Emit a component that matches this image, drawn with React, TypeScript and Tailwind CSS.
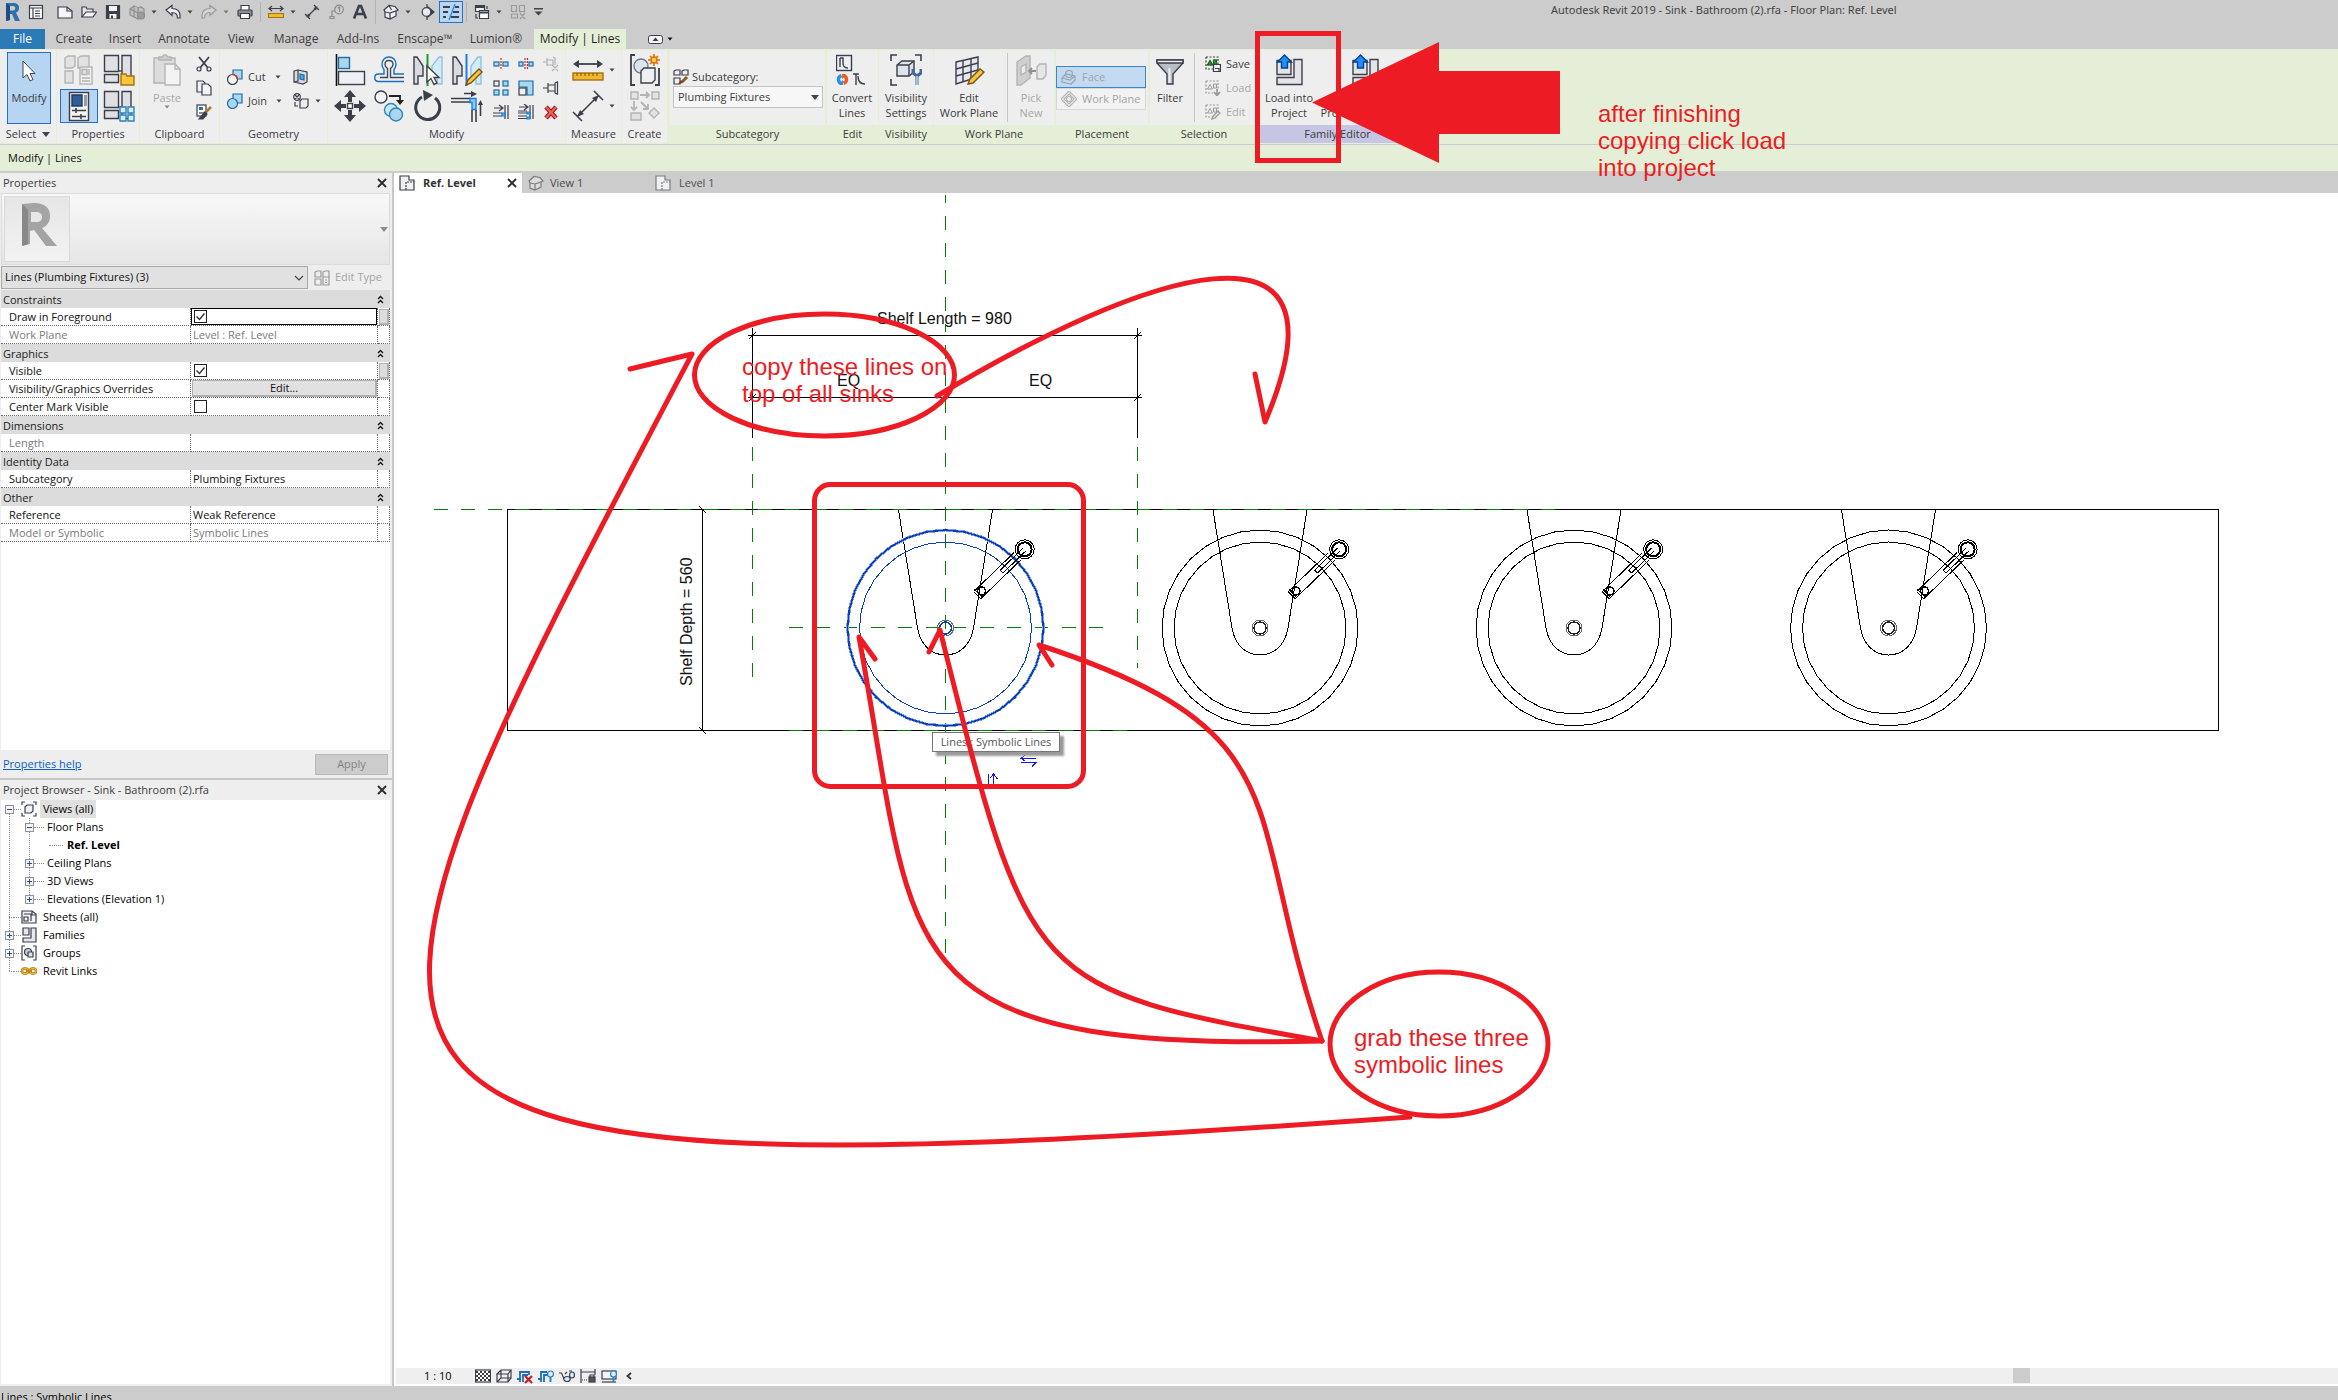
import React from "react";

type Kids = { children?: React.ReactNode };

const D = "#3b3f4a";

function I16({ children }: Kids) {
  return (
    <svg width="16" height="16" viewBox="0 0 16 16" fill="none" stroke={D} strokeWidth="1.2" className="shrink-0" aria-hidden="true">
      {children}
    </svg>
  );
}
function I32({ children }: Kids) {
  return (
    <svg width="32" height="32" viewBox="0 0 32 32" fill="none" stroke={D} strokeWidth="1.4" className="shrink-0" aria-hidden="true">
      {children}
    </svg>
  );
}
function Caret({ color = "#444" }: { color?: string }) {
  return (
    <svg width="6" height="4" viewBox="0 0 6 4" className="shrink-0" aria-hidden="true">
      <path d="M0.5 0.5h5L3 3.5z" fill={color} />
    </svg>
  );
}
function CloseX() {
  return (
    <svg width="10" height="10" viewBox="0 0 10 10" stroke="#2b2b2b" strokeWidth="1.8" aria-hidden="true">
      <path d="M1 1l8 8M9 1l-8 8" />
    </svg>
  );
}

/* ---------- quick access toolbar ---------- */

function QBtn({ label, caret, caretColor, children }: Kids & { label: string; caret?: boolean; caretColor?: string }) {
  return (
    <button type="button" aria-label={label} className="flex items-center gap-[6px]">
      {children}
      {caret && <Caret color={caretColor} />}
    </button>
  );
}

function QuickAccess() {
  return (
    <div className="flex h-6 items-center">
      <div className="flex items-center gap-2 pr-[13px] pl-1">
        <QBtn label="Revit">
          <svg width="16" height="20" viewBox="0 0 16 20" aria-hidden="true">
            <path d="M2 1h7c4 0 6 2 6 5 0 2.500-1.300 4-3 4.700L16 19h-5L8 12H6v6l-4 1z" fill="#2f6fae" />
            <path d="M6 4h3c1.500 0 2.200.800 2.200 2S10.500 8.500 9 8.500H6z" fill="#cccccc" />
            <path d="M2 1l4 3v14l-4 1z" fill="#1d4c86" />
          </svg>
        </QBtn>
        <QBtn label="Home view">
          <I16>
            <rect x="1.500" y="1.500" width="13" height="13" fill="#fff" />
            <path d="M1.500 4h13M5 4v10M7 7h5M7 9.500h5M7 12h5" />
          </I16>
        </QBtn>
      </div>
      <div className="flex items-center gap-2 pr-[7px]">
        <QBtn label="New">
          <I16>
            <path d="M1 3h9l5 4v7H1z" fill="#f4f5f8" />
            <path d="M10 3v4h5" />
          </I16>
        </QBtn>
        <QBtn label="Open">
          <I16>
            <path d="M1 13V3h4l1 2h6v3" fill="#e6e7ea" />
            <path d="M1 13l4-5h10.500L12 13z" fill="#f4f5f8" />
          </I16>
        </QBtn>
        <QBtn label="Save">
          <I16>
            <path d="M1.500 1.500h13v13h-13z" fill="#3b3f4a" />
            <path d="M4 2h8v5H4zM4.500 10h7v4.500h-7z" fill="#f3f3f3" stroke="none" />
            <path d="M6 11.500h2v3H6z" fill={D} stroke="none" />
          </I16>
        </QBtn>
        <QBtn label="Synchronize" caret>
          <I16>
            <g stroke="#8e8e8e" fill="#c0c0c0">
              <path d="M1 5l4-3 4 2 3-1 3 2v6l-6 4-4-2-4-2z" />
              <path d="M5 2v5l4 2V4M1 5l4 2v6" />
              <circle cx="12" cy="11.500" r="3.500" fill="#9c9c9c" />
            </g>
          </I16>
        </QBtn>
        <QBtn label="Undo" caret>
          <I16>
            <path d="M1 6l6-4.500v3c5 0 8 2 8 7.500v2h-2.500c0-4-1.500-5.500-5.500-5.500v3z" fill="#eceef2" />
          </I16>
        </QBtn>
        <QBtn label="Redo" caret caretColor="#777">
          <I16>
            <path d="M15 6L9 1.500v3c-5 0-8 2-8 7.500v2h2.500c0-4 1.500-5.500 5.500-5.500v3z" fill="#d4d4d4" stroke="#9a9a9a" />
          </I16>
        </QBtn>
        <QBtn label="Print">
          <I16>
            <path d="M4 6V1.500h8V6" fill="#fff" />
            <rect x="1" y="6" width="14" height="6" rx="1" fill="#8b8e96" />
            <path d="M3.500 9.500h9v5h-9z" fill="#fff" />
          </I16>
        </QBtn>
      </div>
      <div className="flex h-5 items-center gap-2 border-l border-[#b3b3b3] px-[7px]">
        <QBtn label="Measure" caret>
          <I16>
            <path d="M1 4.500h14M4 2L1 4.500 4 7M12 2l3 2.500L12 7" />
            <rect x="0.500" y="9.500" width="15" height="4" fill="#f0b92f" stroke="#a8720d" strokeWidth="1" />
          </I16>
        </QBtn>
        <QBtn label="Aligned Dimension">
          <I16>
            <path d="M3 13L13 3M10 1l5 5M1 10l5 5" />
            <path d="M13.500 2.500l-4 1.500 2.500 2.500zM2.500 13.500l4-1.500L4 9.500z" fill={D} stroke="none" />
          </I16>
        </QBtn>
        <QBtn label="Tag by Category">
          <I16>
            <g stroke="#8b8b8b">
              <circle cx="11" cy="5.500" r="4.300" />
              <path d="M10 4l1.500-1v5M7 7H4v5M2 12.500h4v2H2z" />
            </g>
          </I16>
        </QBtn>
        <QBtn label="Text">
          <I16>
            <path d="M2 14.500L7 2h2l5 12.500M4.500 10h7" strokeWidth="2.600" />
          </I16>
        </QBtn>
      </div>
      <div className="flex h-6 items-center gap-2 border-l border-[#b3b3b3] pl-[7px]">
        <QBtn label="Default 3D View" caret>
          <I16>
            <path d="M1 6l5-4.500 6 1L15 6l-2 1v5l-6 3-5-2V8z" fill="#eef0f3" />
            <path d="M7 15V9L13 7M2 8l5 1M6 1.500L8.500 6" />
          </I16>
        </QBtn>
        <QBtn label="Section">
          <I16>
            <path d="M8 0v3M8 13v3" />
            <path d="M9 3l6 5-6 5z" fill={D} />
            <circle cx="7.500" cy="8" r="4.300" fill="#e9ebef" />
          </I16>
        </QBtn>
      </div>
      <button type="button" aria-label="Thin Lines" className="ml-1 flex h-[22px] w-6 items-center justify-center border border-[#2a70c0] bg-[#b8d6f2]">
        <I16>
          <path d="M0 3h7M0 8h5M0 13h3M12 3h4M10 8h6M8 13h8" strokeWidth="2" />
          <path d="M12 0L6 16" stroke="#1f7fe0" />
        </I16>
      </button>
      <div className="ml-[3px] flex h-5 items-center gap-2 border-l border-[#b3b3b3] pl-[7px]">
        <QBtn label="Switch Windows" caret>
          <I16>
            <path d="M1.500 1.500h9v6h-9z" fill="#eee" />
            <path d="M5.500 6.500h9v8h-9z" fill="#fff" />
            <path d="M1.500 3h9M5.500 8.500h9" strokeWidth="2" />
            <path d="M13 2v3M2 10v4h2" />
          </I16>
        </QBtn>
        <QBtn label="Close Hidden">
          <I16>
            <g stroke="#9a9a9a">
              <path d="M1.500 1.500h5v6h-5zM9.500 1.500h5v6h-5zM1.500 10h6v4h-6zM10 9l5 6M15 9l-5 6" />
            </g>
          </I16>
        </QBtn>
        <button type="button" aria-label="Customize Quick Access Toolbar">
          <svg width="9" height="8" viewBox="0 0 9 8" aria-hidden="true">
            <path d="M0 0h9v1.500H0zM0.500 3.500h8L4.500 7.500z" fill="#444" />
          </svg>
        </button>
      </div>
    </div>
  );
}

/* ---------- ribbon ---------- */

const TABS: [string, string][] = [
  ["Create", "w-[58px]"],
  ["Insert", "w-[44px]"],
  ["Annotate", "w-[74px]"],
  ["View", "w-[40px]"],
  ["Manage", "w-[70px]"],
  ["Add-Ins", "w-[54px]"],
  ["Enscape™", "w-[80px]"],
  ["Lumion®", "w-[62px]"],
];

function TabRow() {
  return (
    <nav className="flex h-5 text-[12px] leading-5 text-[#3c3c3c]" aria-label="Ribbon tabs">
      <button type="button" className="w-[45px] bg-[#2a7ab5] text-white">File</button>
      {TABS.map(([t, w]) => (
        <button type="button" key={t} className={w + " whitespace-nowrap text-center"}>{t}</button>
      ))}
      <span className="w-[7px]" />
      <button type="button" className="w-[92px] bg-[#e5efd7] whitespace-nowrap text-[#1f1f1f]">Modify | Lines</button>
      <button type="button" aria-label="Minimize ribbon" className="ml-[22px] flex items-center gap-1">
        <svg width="15" height="9" viewBox="0 0 15 9" aria-hidden="true">
          <rect x="0.500" y="0.500" width="14" height="8" rx="2" fill="#f4f4f4" stroke={D} />
          <path d="M4.500 6h6l-3-3.500z" fill={D} />
        </svg>
        <Caret color="#111" />
      </button>
    </nav>
  );
}

function Panel({ w, label, tint, caret, children }: Kids & { w: string; label: string; tint?: string; caret?: boolean }) {
  return (
    <section className={w + " flex shrink-0 flex-col bg-[#eeeeee]"} aria-label={label}>
      <div className="flex h-[75px]">{children}</div>
      <h2 className={(tint ?? "") + " flex h-[18px] items-center justify-center gap-[6px] whitespace-nowrap"}>
        {label}
        {caret && <svg width="8" height="5" viewBox="0 0 8 5" aria-hidden="true"><path d="M0 0h8L4 5z" fill="#444" /></svg>}
      </h2>
    </section>
  );
}

function BigBtn({ w, lines, dim, children }: Kids & { w: string; lines: string[]; dim?: boolean }) {
  return (
    <button type="button" disabled={dim} className={w + (dim ? " text-[#a8a8a8]" : "") + " flex shrink-0 flex-col items-center pt-1 leading-[15px]"}>
      {children}
      <span className="mt-1 flex flex-col whitespace-nowrap">
        {lines.map((l) => <span key={l}>{l}</span>)}
      </span>
    </button>
  );
}

function IconBtn({ label, children }: Kids & { label: string }) {
  return (
    <button type="button" aria-label={label} className="flex items-center justify-center">
      {children}
    </button>
  );
}

const windowGlyph = (
  <>
    <path d="M1.500 1.500h14v16h-14zM19 1.500h9v27h-9zM1.500 20.500h14v8h-14z" fill="#dfe0e4" />
    <path d="M19 17h-4" />
  </>
);

const G = "#b4b4b4";

const MODIFY_LARGE: [string, React.ReactNode][] = [
  ["Align", <><path d="M2.500 0v32" stroke="#111" strokeWidth="1.600" /><rect x="4.500" y="3.500" width="11" height="11" fill="#a9d8ee" stroke="#1b6ea8" /><rect x="4.500" y="17.500" width="26" height="13" fill="#eef0f4" /></>],
  ["Offset", <><path d="M31 27.500H5.500c-5 0-5-7.500 0-7.500H11v-4.500c-1.500-2-2-3.500-2-5C9 6 12 3 16 3s7 3 7 7.500c0 1.500-.500 3-2 5V20h10" stroke="#1a6fc0" /><path d="M31 23.500H17.500v-9c2-1.500 2.500-2.500 2.500-4C20 8 18.500 6.500 16 6.500S12 8 12 10.500c0 1.500.500 2.500 2.500 4v9H7" stroke="#444a55" /></>],
  ["Mirror - Pick Axis", <><path d="M2 3h3l6 9v10H6v8H2z" fill="#d9dbe0" /><path d="M30 3h-3l-7 9v10h5v8h5z" fill="#d3ebf6" stroke="#8fc3df" /><path d="M15.500 0v32" stroke="#1d9a2a" strokeWidth="2" /><path d="M15 12v16l4-3.500 3 6 3-1.500-3-5.500h5z" fill="#fff" stroke="#444" /></>],
  ["Mirror - Draw Axis", <><path d="M2 3h3l6 9v10H6v8H2z" fill="#d9dbe0" /><path d="M30 3h-3l-7 9v10h5v8h5z" fill="#d3ebf6" stroke="#8fc3df" /><path d="M15.500 0v32" stroke="#1a7fe0" strokeWidth="2" /><path d="M15 31l2-5L28 15l3 3-11 11z" fill="#f6c63c" stroke="#7d5212" /></>],
  ["Move", <><path d="M16 0l6 7h-4v5h-4V7h-4zM16 32l-6-7h4v-5h4v5h4zM0 16l7-6v4h5v4H7v4zM32 16l-7 6v-4h-5v-4h5v-4z" fill={D} stroke="none" /><rect x="13.500" y="13.500" width="5" height="5" fill="#fff" /></>],
  ["Copy", <><circle cx="8" cy="7" r="6" fill="#f3f3f5" /><path d="M16 6h11v6" stroke="#222" strokeWidth="1.800" /><path d="M23 10h8l-4 5z" fill="#222" stroke="none" /><circle cx="18" cy="20" r="6.500" fill="#cfe8f5" stroke="#2d83bd" /><circle cx="23" cy="24.500" r="6.500" fill="#a9d8ee" stroke="#2d83bd" /></>],
  ["Rotate", <><path d="M10 7a12 12 0 1 0 13 1" strokeWidth="3" /><path d="M11 0l10 5-9 6z" fill={D} stroke="none" /></>],
  ["Trim/Extend to Corner", <><path d="M0 8.500h20M0 12h20M13 3.500h8" strokeWidth="1.600" /><path d="M20 1l6 3-6 3z" fill={D} stroke="none" /><path d="M19 8.500h6v11h-4v-7h-2z" fill="#8fc8f5" stroke="#1a7fe0" /><path d="M21 20v12M25 20v12M29.500 14v12" strokeWidth="1.600" /><path d="M27 15l2.500-5 2.500 5z" fill={D} stroke="none" /></>],
];

const MODIFY_SMALL: [string, React.ReactNode][] = [
  ["Split Element", <><rect x="1" y="6" width="5" height="4" fill="#a9d8ee" stroke="#1b6ea8" /><rect x="10" y="6" width="5" height="4" fill="#a9d8ee" stroke="#1b6ea8" /><path d="M8 2v12" stroke="#d22" strokeDasharray="2 1" /></>],
  ["Split with Gap", <><rect x="1" y="6" width="4" height="4" fill="#a9d8ee" stroke="#1b6ea8" /><rect x="11" y="6" width="4" height="4" fill="#a9d8ee" stroke="#1b6ea8" /><path d="M7 2v12M9.500 2v12" stroke="#d22" strokeDasharray="2 1" /></>],
  ["Unpin", <g stroke="#b0b0b0"><path d="M0 6h4M4 2v8M4 4h6v5H4M10 1l2 1v7M9 9l6 6M15 9l-6 6" /></g>],
  ["Array", <><rect x="1" y="1" width="5" height="5" fill="#f0f0f0" /><rect x="10" y="1" width="5" height="5" fill="#a9d8ee" stroke="#1b6ea8" /><rect x="1" y="10" width="5" height="5" fill="#a9d8ee" stroke="#1b6ea8" /><rect x="10" y="10" width="5" height="5" fill="#a9d8ee" stroke="#1b6ea8" /></>],
  ["Scale", <><path d="M1 1h14v14H9V7H1z" fill="#a9d8ee" stroke="#1b6ea8" /><rect x="1" y="8" width="7" height="7" fill="#f0f0f0" /></>],
  ["Pin", <path d="M0 8h5M5 3v10M5 5h7v6H5M12 3l2.500-1v12L12 13z" />],
  ["Trim/Extend Single", <><path d="M1 4h8M6 1l4 3-4 3M0 9h9M0 12h9M12 1v14M15 1v14" /><path d="M9 9h3v3H9z" fill="#5ab0f5" stroke="#1a7fe0" /></>],
  ["Trim/Extend Multiple", <><path d="M1 3h8M6 0l4 3-4 3M0 7h9M0 9h9M0 12h9M0 14.500h9M12 1v14M15 1v14" /><path d="M9 8h3v2H9zM9 13h3v2H9z" fill="#5ab0f5" stroke="#1a7fe0" /></>],
  ["Delete", <><path d="M3 3l10 11M13 3L3 14" stroke="#a81616" strokeWidth="4.500" /><path d="M3 3l10 11M13 3L3 14" stroke="#f0605c" strokeWidth="2.200" /></>],
];

function LoadIcon() {
  return (
    <I32>
      <path d="M4 6.500h14v14H4zM21 5.500h8v25H4v-7h17z" fill="#e3e4e8" />
      <path d="M11.500 1l7 7h-4v6h-6V8h-4z" fill="#1e90ff" stroke="#0a3f8a" />
    </I32>
  );
}

const selGlyph = (
  <>
    <path d="M1 1h12v8M1 1v12h7" strokeDasharray="2 1.500" />
    <path d="M2.500 9L5 4.500 7.500 9zM8.500 4h3v4h-3z" strokeWidth="1" />
  </>
);

function Ribbon() {
  const green = "bg-[#e5efd7]";
  return (
    <div className="flex h-24 items-start border-b border-[#c9c9d0] bg-[#e5efd7] pt-px text-[11px] text-[#3c3c3c]">
      <Panel w="w-[56px]" label="Select" caret>
        <button type="button" className="mt-[2px] ml-[7px] flex h-[72px] w-[44px] flex-col items-center border border-[#2a70c0] bg-[#b6d5f2] pt-[7px]">
          <svg width="16" height="22" viewBox="0 0 16 22" aria-hidden="true">
            <path d="M2 1v17l4-3.500 3 6.500 3-1.500-3-6h5z" fill="#fff" stroke="#444" />
          </svg>
          <span className="mt-2 leading-[15px]">Modify</span>
        </button>
      </Panel>
      <Panel w="ml-px w-[82px]" label="Properties">
        <div className="grid w-full grid-cols-2 grid-rows-[36px_36px] pt-[2px]">
          <IconBtn label="Type Properties">
            <I32>
              <g stroke={G} fill="#e2e2e2">
                <path d="M3 4l3-2h7v10l-3 2H3zM16 4l3-2h8v10l-3 2h-8zM3 17h8v12H3z" />
                <rect x="18" y="13" width="12" height="17" fill="#f0f0f0" />
                <path d="M20 15.500h5v5h-5zM27 15v6M20 24h8M20 27h8" />
              </g>
            </I32>
          </IconBtn>
          <IconBtn label="Family Category and Parameters">
            <I32>
              {windowGlyph}
              <path d="M18 20h5l1 2h7v9H18z" fill="#f6c63c" stroke="#a8720d" />
            </I32>
          </IconBtn>
          <button type="button" aria-label="Properties" className="ml-[3px] flex h-[34px] w-[38px] items-center justify-center self-center border border-[#2a70c0] bg-[#b6d5f2]">
            <I32>
              <rect x="6.500" y="2.500" width="19" height="28" fill="#f3f4f6" />
              <path d="M9 5h10v11H9z" fill="#2f5f95" stroke="#1b3c66" />
              <path d="M21 5h3v11h-3z" fill="#9a9da5" stroke="none" />
              <path d="M9 20.500h14M13 18v5M9 26.500h14M18 24v5" strokeWidth="1.600" />
            </I32>
          </button>
          <IconBtn label="Family Types">
            <I32>
              {windowGlyph}
              <path d="M17 17h6v6h-6zM25 17h6v6h-6zM17 25h6v6h-6zM25 25h6v6h-6z" fill="#d5edf8" stroke="#2d83bd" />
            </I32>
          </IconBtn>
        </div>
      </Panel>
      <Panel w="ml-px w-[79px]" label="Clipboard">
        <button type="button" disabled className="ml-[10px] flex w-[34px] flex-col items-center pt-1 text-[#a8a8a8]">
          <I32>
            <g stroke={G}>
              <path d="M3 4h21v25H3z" fill="#dcdcdc" />
              <path d="M8 6V3h3l2-2h2l2 2h3v3z" fill="#cfcfcf" />
              <path d="M14 10h10l5 5v16H14z" fill="#f3f3f3" />
              <path d="M24 10v5h5" />
            </g>
          </I32>
          <span className="mt-1 leading-[15px]">Paste</span>
          <Caret color="#888" />
        </button>
        <div className="ml-[12px] grid grid-rows-[24px_24px_24px] pt-[2px]">
          <IconBtn label="Cut">
            <I16><path d="M3 1l9 11M13 1L4 12" strokeWidth="1.800" /><circle cx="3" cy="13" r="2" /><circle cx="13" cy="13" r="2" /></I16>
          </IconBtn>
          <IconBtn label="Copy to Clipboard">
            <I16><path d="M1 1h6l2 2v9H1z" fill="#f3f3f5" /><path d="M6 4h6l3 3v8H6z" fill="#f3f3f5" /></I16>
          </IconBtn>
          <IconBtn label="Match Type Properties">
            <I16><rect x="1" y="1" width="9" height="11" fill="#fff" /><path d="M3 3h4v3H3z" fill="#2f6fae" stroke="none" /><path d="M3 9h5" /><path d="M15 3l-6 6" stroke="#b07a28" strokeWidth="2.500" /><path d="M9 8l2 2-4 5H3z" fill={D} /></I16>
          </IconBtn>
        </div>
      </Panel>
      <Panel w="ml-px w-[107px]" label="Geometry">
        <div className="flex flex-col gap-2 pt-[19px] pl-[7px]">
          <div className="flex h-4 items-center">
            <I16><path d="M6 1h9v9H6z" fill="#a9d8ee" stroke="#1b6ea8" /><circle cx="5.500" cy="10.500" r="5" fill="#f4f4f4" /><path d="M5 5.500a5 5 0 0 1 5.500 5" stroke="#e03030" strokeWidth="1.600" /></I16>
            <button type="button" className="ml-[5px] flex w-[45px] items-center gap-[9px]">Cut <Caret /></button>
            <IconBtn label="Apply Coping"><I16><path d="M1 2l4-1v11l-4 1zM5 1l9 2v10l-4 2-9-2" fill="#d9dbe0" /><path d="M7 5l4 1v5l-4-1z" fill="#4da6e8" stroke="#1b6ea8" /></I16></IconBtn>
          </div>
          <div className="flex h-4 items-center">
            <I16><path d="M6 1h9v9H6z" fill="#a9d8ee" stroke="#1b6ea8" /><circle cx="5.500" cy="10.500" r="5" fill="#a9d8ee" stroke="#1b6ea8" /></I16>
            <button type="button" className="ml-[5px] flex w-[45px] items-center gap-[9px]">Join <Caret /></button>
            <button type="button" aria-label="Split Face" className="flex items-center gap-[6px]">
              <I16><circle cx="4" cy="4" r="3.300" /><path d="M2 2l4 4M6 2L2 6M2 9v4h3M7 8l2-2h6v7l-2 2H7z" /></I16>
              <Caret />
            </button>
          </div>
        </div>
      </Panel>
      <Panel w="ml-px w-[237px]" label="Modify">
        <div className="ml-[2px] grid grid-cols-[39px_39px_39px_39px] grid-rows-[36px_36px] pt-[2px]">
          {MODIFY_LARGE.map(([l, g]) => <IconBtn key={l} label={l}><I32>{g}</I32></IconBtn>)}
        </div>
        <div className="ml-[2px] grid grid-cols-[25px_25px_25px] grid-rows-[24px_24px_24px] pt-[2px]">
          {MODIFY_SMALL.map(([l, g]) => <IconBtn key={l} label={l}><I16>{g}</I16></IconBtn>)}
        </div>
      </Panel>
      <Panel w="ml-px w-[55px]" label="Measure">
        <div className="ml-[6px] grid grid-rows-[36px_36px] pt-[2px]">
          <button type="button" aria-label="Measure Between References" className="flex items-center gap-[5px]">
            <I32><path d="M3 10h26" strokeWidth="1.800" /><path d="M1 10l6-4v8zM31 10l-6-4v8z" fill={D} stroke="none" /><rect x="1" y="19" width="30" height="7" fill="#efb830" stroke="#a8720d" /><path d="M5 19v3M9 19v3M13 19v3M17 19v3M21 19v3M25 19v3" stroke="#7d5212" strokeWidth="1" /></I32>
            <Caret />
          </button>
          <button type="button" aria-label="Aligned Dimension" className="flex items-center gap-[5px]">
            <I32><path d="M6 26L26 6M22 1l9 9M1 22l9 9" strokeWidth="1.600" /><path d="M27 5l-7 3 4 4zM5 27l7-3-4-4z" fill={D} stroke="none" /></I32>
            <Caret />
          </button>
        </div>
      </Panel>
      <Panel w="ml-px w-[45px]" label="Create">
        <div className="grid w-full grid-rows-[36px_36px] pt-[2px]">
          <IconBtn label="Create Group">
            <I32><path d="M6 1H2v30h4M26 31h4V14" strokeWidth="1.800" /><circle cx="12" cy="12" r="7" fill="#dde4ec" stroke="#707a88" /><path d="M12 17l3-3h11v12l-3 3H12z" fill="#eef0f4" /><path d="M25 0v12M19 6h12M21 2l8 8M29 2l-8 8" stroke="#e06a10" strokeWidth="1.600" /><circle cx="25" cy="6" r="3" fill="#ffd23a" stroke="#e06a10" /></I32>
          </IconBtn>
          <IconBtn label="Create Similar">
            <I32><g stroke={G} fill="#e2e2e2"><path d="M2 2h7v7H2zM23 2h7v7h-7zM2 23h10v7H2zM25 18l5 5-5 5-5-5z" /><path d="M11 5h9M17 2l3 3-3 3M5 11v9M2 17l3 3 3-3M12 12l7 7M19 14v5h-5" fill="none" strokeWidth="1.800" /></g></I32>
          </IconBtn>
        </div>
      </Panel>
      <Panel w="ml-[3px] w-[155px]" label="Subcategory" tint={green}>
        <div className="flex flex-col pt-[18px] pl-[3px]">
          <label htmlFor="subcat" className="flex h-[18px] items-center gap-[3px]">
            <I16><path d="M1 2l2-1h4v5H1zM9 2l2-1h4v5H9zM1 9h6v6H1z" fill="#f0f0f2" /><path d="M14 8l-5 5" stroke="#8a5a25" strokeWidth="3" /><path d="M8 11l2 3-5 1z" fill="#7a3d10" stroke="none" /></I16>
            Subcategory:
          </label>
          <div className="grid items-center">
            <select id="subcat" className="col-start-1 row-start-1 h-[22px] w-[150px] appearance-none border border-[#c4c4c4] bg-[#f7f7f7] pl-1 text-[11px] outline-none">
              <option>Plumbing Fixtures</option>
            </select>
            <svg width="8" height="5" viewBox="0 0 8 5" className="pointer-events-none col-start-1 row-start-1 mr-1 justify-self-end" aria-hidden="true"><path d="M0 0h8L4 5z" fill="#444" /></svg>
          </div>
        </div>
      </Panel>
      <Panel w="ml-[2px] w-[51px]" label="Edit" tint={green}>
        <BigBtn w="w-[50px]" lines={["Convert", "Lines"]}>
          <svg width="32" height="32" viewBox="3 0 32 32" fill="none" stroke={D} strokeWidth="1.4" aria-hidden="true"><rect x="3.500" y="1.500" width="15" height="15" fill="#eef0f4" /><path d="M7 4v9M7 4h3v5c0 3 2 5 5 5" /><path d="M8 20c-5 1-6 8-1 11l-2 0 5 0v-5l-1.500 1.500c-2-1-1.500-4 .500-4z" fill="#2a90f0" stroke="none" /><path d="M11 31c5-1 6-8 1-11l2 0h-5v5l1.500-1.500c2 1 1.500 4-.500 4z" fill="#f05a20" stroke="none" /><path d="M20 20h3v11M26 20h-3M25 22c0 5 2 8 7 8" /></svg>
        </BigBtn>
      </Panel>
      <Panel w="ml-px w-[54px]" label="Visibility" tint={green}>
        <BigBtn w="w-full" lines={["Visibility", "Settings"]}>
          <I32><path d="M1 7V1h6M25 1h6v6M1 25v6h6" strokeWidth="1.600" /><path d="M7 11l5-4h12v11l-5 4H7z" fill="#dfe3ea" /><path d="M7 11h12v11M19 11l5-4" /><path d="M23 15v4l4 3 4-3v-4M27 21v10" strokeWidth="3" stroke="#40689a" /><path d="M27 22v9" stroke="#cfe0f2" strokeWidth="1.400" /></I32>
        </BigBtn>
      </Panel>
      <Panel w="ml-px w-[120px]" label="Work Plane" tint={green}>
        <BigBtn w="w-[70px]" lines={["Edit", "Work Plane"]}>
          <I32><path d="M3 8l22-5v20L3 30z" fill="#e6e8f0" /><path d="M3 15l22-6M3 22l22-6M10 6v22M18 4v22" /><path d="M15 30l2-5 10-10 4 3-11 11z" fill="#f6c63c" stroke="#7d5212" /></I32>
        </BigBtn>
        <span className="my-[3px] ml-[3px] border-l border-[#c6c6c6]" />
        <BigBtn w="w-[46px]" lines={["Pick", "New"]} dim>
          <I32><g stroke={G}><path d="M2 8l9-6h4v22l-9 7H2z" fill="#cfcfcf" /><path d="M6 13l5-3v8l-5 3z" fill="#ececec" /><path d="M14 17h7M17 14l-3 3 3 3" stroke="#909090" strokeWidth="1.800" /><path d="M22 13l3-3h6v11l-3 4h-6z" fill="#e6e6e6" /></g></I32>
        </BigBtn>
      </Panel>
      <Panel w="ml-[2px] w-[92px]" label="Placement" tint={green}>
        <div className="flex w-[90px] flex-col pt-4 text-[#a4a4a4]">
          <button type="button" disabled className="flex h-[22px] items-center gap-[5px] border border-[#3f86cc] bg-[#c2daf1] pl-1">
            <I16><g stroke="#98a4b0"><path d="M1 9l4-4 9 2v4l-4 4-9-2z" /><circle cx="8" cy="5" r="3.500" /><path d="M1 9l8 2 5-4" /></g></I16>Face
          </button>
          <button type="button" disabled className="flex h-[22px] items-center gap-[5px] border border-[#d8d8d8] bg-[#f2f2f2] pl-1">
            <I16><g stroke={G}><path d="M8 0l8 8-8 8-8-8z" /><path d="M8 3l5 5-5 5-5-5z" /><circle cx="8" cy="8" r="2.500" /></g></I16>
            <span className="whitespace-nowrap">Work Plane</span>
          </button>
        </div>
      </Panel>
      <Panel w="ml-[2px] w-[108px]" label="Selection" tint={green}>
        <BigBtn w="w-[40px]" lines={["Filter"]}>
          <I32><path d="M3 6h26v3L19 20v10h-6V20L3 9z" fill="#b9bdc6" /><path d="M3 6h26v3H3z" fill="#eceef2" /><path d="M15.500 14v15" stroke="#eef0f4" strokeWidth="2" /></I32>
        </BigBtn>
        <span className="my-[3px] ml-1 border-l border-[#c6c6c6]" />
        <div className="ml-[10px] grid grid-rows-[24px_24px_24px] pt-[2px] text-[#a8a8a8]">
          <button type="button" className="flex items-center gap-[5px] text-[#3c3c3c]"><I16>{selGlyph}<path d="M2.500 9L5 4.500 7.500 9zM8.500 4h3v4h-3z" fill="#2f8f2f" stroke="#1d6a1d" /><path d="M8.500 8.500h7v7h-7z" fill="#f0f0f0" /><path d="M10 12.500h4v3" /></I16>Save</button>
          <button type="button" disabled className="flex items-center gap-[5px]"><I16><g stroke="#9a9a9a">{selGlyph}<path d="M12 9v6M9 12l3 3.500 3-3.500" strokeWidth="1.800" /></g></I16>Load</button>
          <button type="button" disabled className="flex items-center gap-[5px]"><I16><g stroke="#9a9a9a">{selGlyph}<path d="M7 15l1-3 5-5 2 2-5 5z" fill="#ddd" /></g></I16>Edit</button>
        </div>
      </Panel>
      <Panel w="ml-[2px] w-[155px]" label="Family Editor" tint="bg-[#c6c6e4]">
        <BigBtn w="w-[58px]" lines={["Load into", "Project"]}><LoadIcon /></BigBtn>
        <BigBtn w="w-[94px]" lines={["Load into", "Project and Close"]}><LoadIcon /></BigBtn>
      </Panel>
    </div>
  );
}

/* ---------- properties palette ---------- */

type Row =
  | { kind: "head"; name: string }
  | { kind: "check"; name: string; on: boolean; focus?: boolean; side?: boolean }
  | { kind: "text"; name: string; value: string; dim?: boolean }
  | { kind: "edit"; name: string };

const ROWS: Row[] = [
  { kind: "head", name: "Constraints" },
  { kind: "check", name: "Draw in Foreground", on: true, focus: true, side: true },
  { kind: "text", name: "Work Plane", value: "Level : Ref. Level", dim: true },
  { kind: "head", name: "Graphics" },
  { kind: "check", name: "Visible", on: true, side: true },
  { kind: "edit", name: "Visibility/Graphics Overrides" },
  { kind: "check", name: "Center Mark Visible", on: false },
  { kind: "head", name: "Dimensions" },
  { kind: "text", name: "Length", value: "", dim: true },
  { kind: "head", name: "Identity Data" },
  { kind: "text", name: "Subcategory", value: "Plumbing Fixtures" },
  { kind: "head", name: "Other" },
  { kind: "text", name: "Reference", value: "Weak Reference" },
  { kind: "text", name: "Model or Symbolic", value: "Symbolic Lines", dim: true },
];

function PropRow({ r }: { r: Row }) {
  if (r.kind === "head")
    return (
      <tr className="bg-[#dcdcdc]">
        <th colSpan={3} className="p-0 text-left font-normal text-[#222]">
          <div className="flex h-[18px] items-center justify-between pr-[6px] pl-[2px] leading-[15px]">
            {r.name}
            <svg width="7" height="9" viewBox="0 0 7 9" fill="none" stroke="#111" strokeWidth="1.300" aria-hidden="true">
              <path d="M1 4l2.500-2.500L6 4M1 8l2.500-2.500L6 8" />
            </svg>
          </div>
        </th>
      </tr>
    );
  const id = "prop-" + r.name.replace(/\W/g, "");
  const dim = r.kind === "text" && r.dim;
  return (
    <tr className={dim ? "text-[#7a7a7a]" : "text-[#111]"}>
      <td className="border-r border-b border-dotted border-[#6d6d6d] p-0 pl-2 whitespace-nowrap">
        <label htmlFor={r.kind === "check" ? id : undefined} className="flex h-[17px] items-center leading-[15px]">{r.name}</label>
      </td>
      <td className="border-r border-b border-dotted border-[#6d6d6d] p-0">
        {r.kind === "text" && <span className="flex h-[17px] items-center pl-[2px] leading-[15px]">{r.value}</span>}
        {r.kind === "check" && (
          <div className={(r.focus ? "border-black" : "border-transparent") + " grid h-[17px] items-center border pl-[2px]"}>
            <input id={id} type="checkbox" defaultChecked={r.on} className="peer col-start-1 row-start-1 size-[13px] appearance-none border border-[#222] bg-white" />
            <svg width="13" height="13" viewBox="0 0 13 13" fill="none" stroke="#333" strokeWidth="1.400" className="pointer-events-none invisible col-start-1 row-start-1 peer-checked:visible" aria-hidden="true">
              <path d="M2.500 6.500l3 3 5-6" />
            </svg>
          </div>
        )}
        {r.kind === "edit" && (
          <button type="button" className="ml-px flex h-[17px] w-[185px] items-center justify-center border border-r-2 border-b-2 border-[#b0b0b0] bg-[#e1e1e1] leading-[14px]">Edit...</button>
        )}
      </td>
      <td className="border-r border-b border-dotted border-[#6d6d6d] p-0">
        {r.kind === "check" && r.side && <button type="button" aria-label={"Associate " + r.name} className="ml-px block h-4 w-[10px] border border-r-2 border-b-2 border-[#b0b0b0] bg-[#dddddd]" />}
      </td>
    </tr>
  );
}

function PaletteTitle({ title }: { title: string }) {
  return (
    <div className="flex h-5 shrink-0 items-center justify-between pr-[5px] pl-[3px] text-[#3c3c3c]">
      <h2>{title}</h2>
      <button type="button" aria-label={"Close " + title}><CloseX /></button>
    </div>
  );
}

function Properties() {
  return (
    <section className="flex h-[607px] shrink-0 flex-col border-b-2 border-[#c8c8c8]" aria-label="Properties">
      <PaletteTitle title="Properties" />
      <div className="mr-[2px] ml-px flex h-[72px] shrink-0 items-center justify-between border border-[#dcdcdc] bg-linear-to-b from-[#f8f8f8] to-[#e6e6e6] pr-px pl-[2px]">
        <div className="flex size-[66px] items-start justify-center border border-[#dadada] bg-linear-to-b from-[#e6e6e6] to-[#f2f2f2] pt-[5px] pl-1">
          <svg width="38" height="45" viewBox="0 0 38 45" aria-hidden="true">
            <path d="M2 2l12-1c11 0 16 5 16 13 0 6-3 10-8 12l15 18H26L14 28l-4 1v13l-8 2z" fill="#a4a4a4" />
            <path d="M11 10h5c4 0 6 2 6 5s-2 5-5 5h-6z" fill="#e6e6e6" />
            <path d="M2 2l6 6v34l-6 2z" fill="#888888" />
          </svg>
        </div>
        <svg width="8" height="5" viewBox="0 0 8 5" aria-hidden="true"><path d="M0 0h8L4 5z" fill="#8c8c8c" /></svg>
      </div>
      <div className="flex h-[25px] shrink-0 items-center pl-px">
        <div className="grid items-center">
          <select aria-label="Type filter" className="col-start-1 row-start-1 h-[23px] w-[307px] appearance-none border border-[#a9a9a9] bg-[#e1e1e1] pl-[3px] text-[11px] text-[#111] outline-none">
            <option>Lines (Plumbing Fixtures) (3)</option>
          </select>
          <svg width="10" height="6" viewBox="0 0 10 6" fill="none" stroke="#444" strokeWidth="1.200" className="pointer-events-none col-start-1 row-start-1 mr-1 justify-self-end" aria-hidden="true"><path d="M1 1l4 4 4-4" /></svg>
        </div>
        <button type="button" disabled className="ml-[6px] flex items-center gap-[5px] text-[#a4a4a4]">
          <I16><g stroke="#9c9c9c"><path d="M1 2l2-1h4v6H1zM9 2l2-1h4v6H9zM1 9h6v6H1zM9 7h6v8H9zM11 10h2M11 12.500h2" /></g></I16>
          Edit Type
        </button>
      </div>
      <div className="mr-[2px] ml-px min-h-0 flex-1 bg-white">
        <table className="w-full table-fixed border-separate border-spacing-0">
          <colgroup><col className="w-[190px]" /><col /><col className="w-[12px]" /></colgroup>
          <tbody>{ROWS.map((r) => <PropRow key={r.kind + r.name} r={r} />)}</tbody>
        </table>
      </div>
      <div className="flex h-[28px] shrink-0 items-center justify-between pr-1 pl-[3px]">
        <a href="#help" className="text-[#0a5fc4] underline">Properties help</a>
        <button type="button" disabled className="h-[21px] w-[73px] border border-[#b9b9b9] bg-[#cccccc] text-[#838383]">Apply</button>
      </div>
    </section>
  );
}

/* ---------- project browser ---------- */

function Expander({ open, name }: { open: boolean; name: string }) {
  return (
    <button type="button" aria-label={(open ? "Collapse " : "Expand ") + name} aria-expanded={open} className="relative shrink-0">
      <svg width="9" height="9" viewBox="0 0 9 9" aria-hidden="true">
        <rect x="0.500" y="0.500" width="8" height="8" fill="#f4f4f4" stroke="#919191" />
        <path d={open ? "M2 4.500h5" : "M2 4.500h5M4.500 2v5"} stroke="#2b4f9e" />
      </svg>
    </button>
  );
}

type Node = { name: string; level: number; open?: boolean; leaf?: boolean; icon?: React.ReactNode; selected?: boolean; bold?: boolean };

const TREE: Node[] = [
  { name: "Views (all)", level: 0, open: true, selected: true, icon: <><path d="M4 1H1v3M12 1h3v3M4 15H1v-3M12 15h3v-3" /><path d="M4 6l2-2h6v6l-2 2H4z" fill="#eef0f3" /></> },
  { name: "Floor Plans", level: 1, open: true },
  { name: "Ref. Level", level: 2, leaf: true, bold: true },
  { name: "Ceiling Plans", level: 1 },
  { name: "3D Views", level: 1 },
  { name: "Elevations (Elevation 1)", level: 1 },
  { name: "Sheets (all)", level: 0, leaf: true, icon: <><path d="M1 2h10l4 3v9H1z" fill="#f3f3f5" /><path d="M3 5h7v7M3 12V8h4v4zM11 2v4h4" /></> },
  { name: "Families", level: 0, icon: <path d="M2 1h6v7H2zM10 1h5v14H2v-4h8z" fill="#e6e7eb" /> },
  { name: "Groups", level: 0, icon: <><path d="M4 1H1v14h3M12 1h3v14h-3" /><circle cx="7" cy="7" r="3.500" fill="#c9d2dc" /><path d="M7 7h5v5H7z" fill="#dfe3ea" /></> },
  { name: "Revit Links", level: 0, leaf: true, icon: <><rect x="1" y="5.500" width="6" height="5" rx="2.500" stroke="#a8720d" strokeWidth="2.600" /><rect x="9" y="5.500" width="6" height="5" rx="2.500" stroke="#a8720d" strokeWidth="2.600" /><rect x="1" y="5.500" width="6" height="5" rx="2.500" stroke="#f0b92f" /><rect x="9" y="5.500" width="6" height="5" rx="2.500" stroke="#f0b92f" /><path d="M5 8h6" stroke="#c48a10" strokeWidth="2" /></> },
];

const INDENT = ["pl-1", "pl-6", "pl-12"];

function Browser() {
  return (
    <section className="flex min-h-0 flex-1 flex-col" aria-label="Project Browser">
      <PaletteTitle title="Project Browser - Sink - Bathroom (2).rfa" />
      <div className="relative mr-[2px] mb-[2px] ml-px min-h-0 flex-1 overflow-hidden bg-white">
        <svg width="40" height="172" viewBox="0 0 40 172" className="pointer-events-none absolute top-0 left-0" fill="none" stroke="#8c8c8c" strokeDasharray="1 1" aria-hidden="true">
          <path d="M8.500 14v157M28.500 18v82" />
        </svg>
        <ul className="text-black">
          {TREE.map((n) => (
            <li key={n.name} className={INDENT[n.level] + (n.bold ? " font-bold" : "") + " relative flex h-[18px] items-center"}>
              {n.level === 2 ? <span className="mr-1 w-[14px] border-t border-dotted border-[#8c8c8c]" /> : (
                <>
                  {n.leaf ? <span className="ml-1 w-[5px] border-t border-dotted border-[#8c8c8c]" /> : <Expander open={!!n.open} name={n.name} />}
                  <span className={(n.level === 1 ? "mr-[3px] w-[10px]" : "w-[7px]") + " border-t border-dotted border-[#8c8c8c]"} />
                </>
              )}
              {n.icon && <I16>{n.icon}</I16>}
              <span className={(n.selected ? "bg-[#e0e0e0] " : "") + (n.icon ? "ml-[3px] px-[3px]" : "") + " leading-[18px]"}>{n.name}</span>
            </li>
          ))}
        </ul>
      </div>
    </section>
  );
}

/* ---------- drawing ---------- */

function ngon(cx: number, cy: number, r: number, n: number) {
  return Array.from({ length: n }, (_, i) => {
    const a = (i / n) * Math.PI * 2;
    return (cx + r * Math.cos(a)).toFixed(1) + "," + (cy + r * Math.sin(a)).toFixed(1);
  }).join(" ");
}

function Sink({ x, active }: { x: number; active?: boolean }) {
  const c = active ? "#0a3fb8" : "#000";
  return (
    <g transform={`translate(${x} 628)`} fill="none" stroke="#000" strokeWidth="1">
      <path d="M-47 -118L-28 0C-25 18 -13 27 0 27S25 18 28 0L47 -118" />
      {active && <polygon points={ngon(0, 0, 98, 32)} stroke="#7d9ee0" strokeWidth="3" />}
      <polygon points={ngon(0, 0, 98, 32)} stroke={c} strokeWidth={active ? 1.5 : 1} />
      <polygon points={ngon(0, 0, 86, 32)} stroke={c} />
      <circle r="8" stroke="#666" />
      <circle r="6" stroke={active ? "#0a3fb8" : "#222"} strokeWidth="1.500" />
      <g transform="translate(36 -37) rotate(-44)">
        <path d="M-6 -5h56M-6 5h56M-6 -5v10M-4 -6v12" />
        <circle r="4" strokeWidth="1.500" />
        <path d="M28 -2h32M28 2h32M28 -2v4" />
        <circle cx="60" r="9.500" />
        <circle cx="60" r="7" strokeWidth="2" />
      </g>
    </g>
  );
}

function Drawing() {
  return (
    <svg width="1944" height="1207" viewBox="394 193 1944 1207" shapeRendering="crispEdges" className="absolute top-0 left-0" role="img" aria-label="Floor plan of four sinks on a shelf">
      <g fill="none" stroke="#000" strokeWidth="1">
        <path d="M507.500 509.500H2218.500V730.500H507.500z" />
        <path d="M752.500 328V438M1137.500 328V438M748 335.500h394M748 397.500h394M702.500 509v222" />
        <path d="M749 339l7-7M1134 339l7-7M749 401l7-7M1134 401l7-7M699 506l7 7M699 727l7 7" />
      </g>
      <g fill="none" stroke="#008000" strokeWidth="1" strokeDasharray="14 13">
        <path d="M945.500 195V317M945.500 324V958" strokeDashoffset="6" />
        <path d="M752.500 447V678M1137.500 447V668" />
        <path d="M434 509.500H1555M789 730.500H1137" />
        <path d="M789 627.500H1104" strokeDasharray="13.600 13.700" />
      </g>
      {[945.5, 1260, 1574, 1888.5].map((x, i) => <Sink key={x} x={x} active={i === 0} />)}
      <g fill="#111" className="font-['Liberation_Sans',sans-serif] text-[16px]">
        <text x="877" y="324">Shelf Length = 980</text>
        <text x="837" y="386">EQ</text>
        <text x="1029" y="386">EQ</text>
        <text x="692" y="686" transform="rotate(-90 692 686)">Shelf Depth = 560</text>
      </g>
      <g fill="none" stroke="#1414f0" strokeWidth="1">
        <path d="M1036 758.500h-15l4-3M1021 762.500h15l-4 4M1021 758l4 3M988.500 788v-14M993.500 788v-14l4 5M993.500 774l-3 4" />
      </g>
    </svg>
  );
}

/* red pen markup drawn over the whole window */
function Markup() {
  return (
    <svg width="2338" height="1400" viewBox="0 0 2338 1400" className="pointer-events-none absolute top-0 left-0" role="img" aria-label="Markup">
      <g fill="none" stroke="#ed1c24" strokeWidth="5" strokeLinecap="round" strokeLinejoin="round">
        <rect x="1257.500" y="33.500" width="81" height="127" strokeLinejoin="miter" />
        <ellipse cx="824.500" cy="375" rx="130" ry="61" />
        <ellipse cx="1439" cy="1044" rx="109" ry="72" />
        <rect x="814.500" y="484.500" width="269" height="302" rx="16" />
        <path d="M1410 1117C242 1201 279 1136 692 354L630 369" />
        <path d="M1322 1041C880 1052 918 957 859 637L875 659" />
        <path d="M1322 1041C1028 989 1029 985 940 630L929 652" />
        <path d="M1322 1041C1242 808 1306 732 1039 645L1052 665" />
        <path d="M937 396C1140 274 1361 197 1265 422L1255 374" />
      </g>
      <path d="M1312 102.500L1439 42V71H1560V134H1439V163z" fill="#ed1c24" />
      <g fill="#ed1c24" className="font-['Liberation_Sans',sans-serif] text-[24px]">
        <text x="1598" y="122">after finishing</text>
        <text x="1598" y="149">copying click load</text>
        <text x="1598" y="176">into project</text>
        <text x="742" y="375">copy these lines on</text>
        <text x="742" y="402">top of all sinks</text>
        <text x="1354" y="1046">grab these three</text>
        <text x="1354" y="1073">symbolic lines</text>
      </g>
    </svg>
  );
}

const VIEW_ICONS: [string, React.ReactNode][] = [
  ["Detail Level", <><rect x="0.500" y="2" width="15" height="12" fill="#fff" /><path d="M1 4h14M1 8h14M1 12h14" strokeDasharray="2 2" strokeWidth="2" /><path d="M3 6h12M3 10h12" strokeDasharray="2 2" strokeWidth="2" /></>],
  ["Visual Style", <path d="M1 6l4-4h10l-3 4zM1 6h11v8H1zM12 14l3-4V2M5 2v8L1 14M5 10h10" />],
  ["Crop View", <><path d="M0 11h4M3 14V4h9v3M6 14V7h5" stroke="#1a6fc0" strokeWidth="1.800" /><path d="M8 8l7 7M15 8l-7 7" stroke="#c81e1e" strokeWidth="2.200" /></>],
  ["Show Crop Region", <><path d="M0 11h4M3 14V4h6M6 14V7h4" stroke="#1a6fc0" strokeWidth="1.800" /><circle cx="12.500" cy="6" r="3" fill="#d5edf8" stroke="#2d83bd" /><path d="M12.500 9v5" stroke="#2d83bd" strokeWidth="2" /></>],
  ["Temporary Hide/Isolate", <><path d="M0 5h2.500l2.500 6" /><ellipse cx="8" cy="11" rx="3.200" ry="2.500" fill="#d5edf8" /><ellipse cx="13" cy="7" rx="2.500" ry="3" fill="#d5edf8" /><path d="M6 6l2-2M10 3h3" /></>],
  ["Reveal Constraints", <><path d="M1 1v14M15 1v6M1 4h14" /><path d="M2 12h6" strokeDasharray="1 1" /><rect x="9" y="9" width="6" height="5" fill="#555" /><path d="M10 9V7h4v2" /></>],
  ["Reveal Hidden Elements", <><rect x="1" y="3" width="14" height="8" fill="#f4f4f4" /><path d="M1 14h14" /><circle cx="12.500" cy="6" r="3" fill="#d5edf8" stroke="#2d83bd" /><path d="M12.500 9v5" stroke="#2d83bd" strokeWidth="2" /></>],
];

const planIcon = (
  <><path d="M1 1h9v4h5v10H1z" fill="#f0f1f4" /><path d="M7 15V7h8" strokeDasharray="2 1" /></>
);

function Workspace() {
  return (
    <main className="flex min-w-0 flex-1 flex-col">
      <div className="flex h-5 shrink-0 bg-[#cccccc] text-[#4c4c4c]" role="tablist">
        <div className="flex w-[128px] items-center bg-white pr-[5px] pl-[5px]">
          <button type="button" role="tab" aria-selected="true" className="flex flex-1 items-center gap-2 font-bold text-[#333]"><I16>{planIcon}</I16>Ref. Level</button>
          <button type="button" aria-label="Close Ref. Level"><CloseX /></button>
        </div>
        <button type="button" role="tab" aria-selected="false" className="flex w-[127px] items-center gap-[6px] pl-[6px]">
          <I16><g stroke="#7c7c7c"><path d="M1 6l5-4.500 6 1L15 6l-2 1v5l-6 3-5-2V8z" fill="#dcdcdc" /><path d="M7 15V9l6-2M2 8l5 1" /></g></I16>View 1
        </button>
        <button type="button" role="tab" aria-selected="false" className="flex items-center gap-2 pl-[6px]">
          <I16><g stroke="#7c7c7c">{planIcon}</g></I16>Level 1
        </button>
      </div>
      <div className="relative min-h-0 flex-1 overflow-hidden bg-white">
        <Drawing />
        <div role="tooltip" className="absolute top-[539px] left-[538px] h-5 w-[128px] border border-[#767676] bg-white text-center leading-[18px] whitespace-nowrap text-[#575757] shadow-[4px_4px_2px_#9a9a9a]">Lines : Symbolic Lines</div>
      </div>
      <div className="shrink-0 bg-white pb-[2px] pl-[2px]">
        <div className="flex h-4 items-center bg-[#efefef]">
          <button type="button" className="w-[79px] pl-[28px] text-left whitespace-nowrap text-black">1 : 10</button>
          <div className="flex gap-[5px]">
            {VIEW_ICONS.map(([l, g]) => <IconBtn key={l} label={l}><I16>{g}</I16></IconBtn>)}
          </div>
          <button type="button" aria-label="Collapse view bar" className="ml-[9px]">
            <svg width="6" height="8" viewBox="0 0 6 8" fill="none" stroke="#333" strokeWidth="1.800" aria-hidden="true"><path d="M5 1L1.500 4 5 7" /></svg>
          </button>
          <div className="flex h-full flex-1 items-start">
            <span className="grow-[1382] basis-0" />
            <span className="h-[15px] w-[17px] bg-[#cccccc]" />
            <span className="grow-[308] basis-0" />
          </div>
        </div>
      </div>
    </main>
  );
}

export default function App() {
  return (
    <div className="relative flex h-screen flex-col overflow-hidden bg-[#cccccc] font-['Open_Sans',sans-serif] text-[11px]">
      <header className="shrink-0">
        <div className="flex h-[29px] items-start">
          <QuickAccess />
          <span className="grow-[998] basis-0" />
          <h1 className="font-['Noto_Sans',sans-serif] leading-5 whitespace-nowrap text-[#444]">Autodesk Revit 2019 - Sink - Bathroom (2).rfa - Floor Plan: Ref. Level</h1>
          <span className="grow-[437] basis-0" />
        </div>
        <TabRow />
        <Ribbon />
        <div className="flex h-[26px] items-center bg-[#e5efd7] pl-2 text-[#111]">Modify | Lines</div>
      </header>
      <div className="flex min-h-0 flex-1 pt-[2px]">
        <aside className="flex w-[394px] shrink-0 flex-col border-r-2 border-[#c8c8c8] bg-[#eeeeee]">
          <Properties />
          <Browser />
        </aside>
        <Workspace />
      </div>
      <footer className="h-[14px] shrink-0 overflow-hidden pt-[3px] pl-px leading-[16px] text-black">Lines : Symbolic Lines</footer>
      <Markup />
    </div>
  );
}
